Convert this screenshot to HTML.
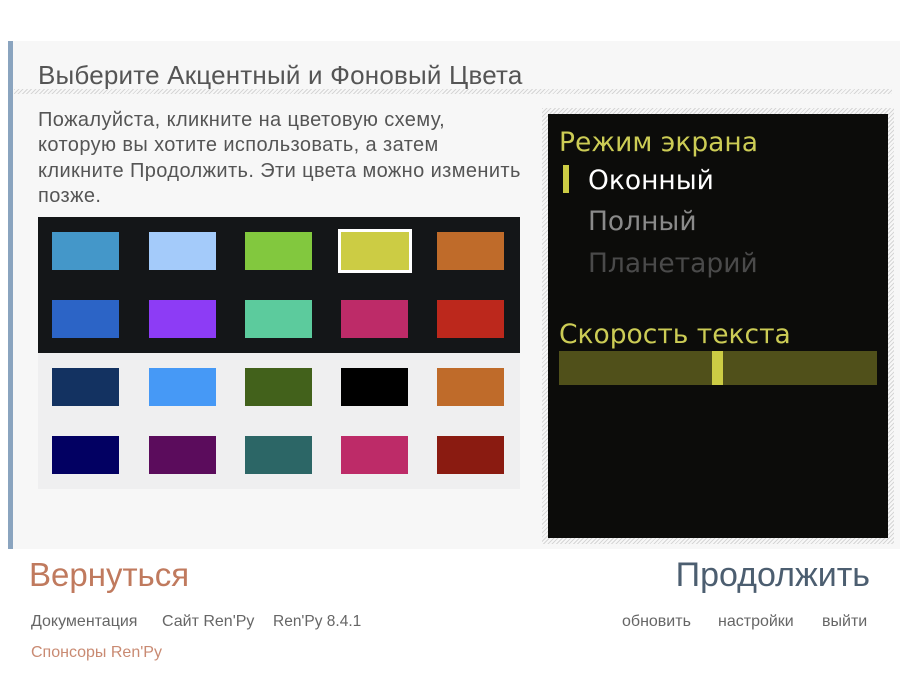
<!DOCTYPE html>
<html><head><meta charset="utf-8"><style>
*{margin:0;padding:0;box-sizing:border-box}
body{width:900px;height:678px;background:#fff;position:relative;overflow:hidden;font-family:"Liberation Sans",sans-serif}
.a{position:absolute;white-space:nowrap}
.hatch{background:repeating-linear-gradient(135deg,#d6d6d6 0 1px,#f7f7f7 1px 3px)}
.sw{position:absolute;width:67px;height:38px}
.r{font-family:"DejaVu Sans",sans-serif;font-size:26.5px}
</style></head><body>
<div class="a" style="left:8px;top:41px;width:892px;height:508px;background:#f7f7f7"></div>
<div class="a" style="left:8px;top:41px;width:5px;height:508px;background:#8aa4bf"></div>
<div class="a" style="left:38px;top:60px;font-size:26px;color:#555;letter-spacing:0.2px">Выберите Акцентный и Фоновый Цвета</div>
<div class="a hatch" style="left:14px;top:89px;width:878px;height:5px"></div>
<div class="a" style="left:38px;top:108px;font-size:20px;line-height:25.3px;color:#555;letter-spacing:0.4px">Пожалуйста, кликните на цветовую схему,<br>которую вы хотите использовать, а затем<br>кликните Продолжить. Эти цвета можно изменить<br>позже.</div>
<div class="a" style="left:38px;top:217px;width:482px;height:136px;background:#141618"></div>
<div class="a" style="left:38px;top:353px;width:482px;height:136px;background:#efeff0"></div>
<div class="sw" style="left:52px;top:232px;background:#4497c9"></div>
<div class="sw" style="left:149px;top:232px;background:#a4cbfa"></div>
<div class="sw" style="left:245px;top:232px;background:#82c83e"></div>
<div class="sw" style="left:338px;top:229px;width:74px;height:44px;background:#cccc44;border:3px solid #fff"></div>
<div class="sw" style="left:437px;top:232px;background:#bf6b2a"></div>
<div class="sw" style="left:52px;top:300px;background:#2c64c6"></div>
<div class="sw" style="left:149px;top:300px;background:#8d3cf5"></div>
<div class="sw" style="left:245px;top:300px;background:#5ccb9d"></div>
<div class="sw" style="left:341px;top:300px;background:#bd2b68"></div>
<div class="sw" style="left:437px;top:300px;background:#bc281c"></div>
<div class="sw" style="left:52px;top:368px;background:#133261"></div>
<div class="sw" style="left:149px;top:368px;background:#4699f6"></div>
<div class="sw" style="left:245px;top:368px;background:#42611b"></div>
<div class="sw" style="left:341px;top:368px;background:#000"></div>
<div class="sw" style="left:437px;top:368px;background:#bf6b2a"></div>
<div class="sw" style="left:52px;top:436px;background:#020062"></div>
<div class="sw" style="left:149px;top:436px;background:#5b0c5c"></div>
<div class="sw" style="left:245px;top:436px;background:#2c6666"></div>
<div class="sw" style="left:341px;top:436px;background:#bd2b68"></div>
<div class="sw" style="left:437px;top:436px;background:#8a1b11"></div>
<div class="a hatch" style="left:542px;top:108px;width:352px;height:436px"></div>
<div class="a" style="left:548px;top:114px;width:340px;height:424px;background:#0c0c0a"></div>
<div class="a r" style="left:559px;top:127px;color:#cccc55">Режим экрана</div>
<div class="a" style="left:563px;top:165px;width:6px;height:28px;background:#cccc44"></div>
<div class="a r" style="left:588px;top:165px;color:#fff">Оконный</div>
<div class="a r" style="left:588px;top:206px;color:#8a8a8a">Полный</div>
<div class="a r" style="left:588px;top:248px;color:#4a4a4a">Планетарий</div>
<div class="a r" style="left:559px;top:319px;color:#cccc55">Скорость текста</div>
<div class="a" style="left:559px;top:351px;width:318px;height:34px;background:#50501a"></div>
<div class="a" style="left:712px;top:351px;width:11px;height:34px;background:#cccc44"></div>
<div class="a" style="left:29px;top:556px;font-size:33px;color:#c07a5e">Вернуться</div>
<div class="a" style="right:30px;top:556px;font-size:34px;color:#4c5e70">Продолжить</div>
<div class="a" style="left:31px;top:613px;font-size:16px;color:#666">Документация</div>
<div class="a" style="left:162px;top:613px;font-size:16px;color:#666">Сайт Ren'Py</div>
<div class="a" style="left:273px;top:613px;font-size:15.5px;color:#666">Ren'Py 8.4.1</div>
<div class="a" style="left:31px;top:644px;font-size:16px;color:#c98a72">Спонсоры Ren'Py</div>
<div class="a" style="left:622px;top:613px;font-size:16px;color:#666">обновить</div>
<div class="a" style="left:718px;top:613px;font-size:16px;color:#666">настройки</div>
<div class="a" style="left:822px;top:613px;font-size:16px;color:#666">выйти</div>
</body></html>
